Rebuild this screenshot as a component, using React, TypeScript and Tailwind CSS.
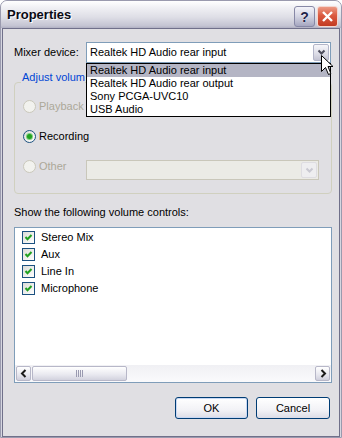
import React from "react";

const font = "font-['Liberation_Sans',Arial,sans-serif]";

function Chevron({ color = "#4d4d5c" }: { color?: string }) {
  return (
    <svg width="9" height="7" viewBox="0 0 9 7">
      <path d="M1.5 1.5 L4.5 4.5 L7.5 1.5" fill="none" stroke={color} strokeWidth="2" />
    </svg>
  );
}

function Radio({ checked, disabled }: { checked?: boolean; disabled?: boolean }) {
  return (
    <div
      className={
        "w-[13px] h-[13px] shrink-0 rounded-full border flex items-center justify-center " +
        (disabled
          ? "border-[#cac8bb] bg-[#f2f2ee]"
          : "border-[#1c5180] bg-[linear-gradient(135deg,#dcdcd7,#ffffff)]")
      }
    >
      {checked && <div className="w-[5px] h-[5px] rounded-full bg-[#21a121] shadow-[0_0_0_1px_#7fd07f]" />}
    </div>
  );
}

function Check({ label }: { label: string }) {
  return (
    <div className="h-[17px] flex items-center">
      <div className="w-[13px] h-[13px] border border-[#1c5180] bg-[linear-gradient(135deg,#dcdcd7,#ffffff)] flex items-center justify-center">
        <svg width="11" height="11" viewBox="0 0 11 11">
          <path d="M2.5 5 L4.5 7.2 L8.5 3" fill="none" stroke="#21a121" strokeWidth="2" />
        </svg>
      </div>
      <span className="ml-[6px] leading-[13px]">{label}</span>
    </div>
  );
}

function ScrollArrow({ dir }: { dir: "l" | "r" }) {
  return (
    <div className="w-[17px] h-full p-[1px]">
      <div className="w-full h-full rounded-[2px] border border-[#b7b7c8] bg-[linear-gradient(to_bottom,#ffffff,#e6e6ee_60%,#cfcfdc)] flex items-center justify-center">
        <svg width="8" height="9" viewBox="0 0 8 9">
          <path
            d={dir === "l" ? "M5.5 1 L2 4.5 L5.5 8" : "M2.5 1 L6 4.5 L2.5 8"}
            fill="none"
            stroke="#1a1a1a"
            strokeWidth="2"
          />
        </svg>
      </div>
    </div>
  );
}

export default function App() {
  return (
    <div className={`w-[342px] h-[438px] flex flex-col bg-[#d6d6e0] border border-[#9a9aae] rounded-t-[7px] overflow-hidden text-[11px] text-black ${font}`}>
      {/* title bar */}
      <div className="h-[27px] shrink-0 flex items-center pl-[6px] pr-[3px] bg-[linear-gradient(to_bottom,#ffffff_0%,#f0f0f4_25%,#dedee6_60%,#c4c4d2_92%,#b0b0c2_100%)]">
        <span className="font-bold text-[13px] leading-[16px] text-[#0a0a14] [text-shadow:1px_1px_0_#ffffff]">Properties</span>
        <div className="ml-auto flex gap-[2px] mt-[4px]">
          <div className="w-[21px] h-[21px] rounded-[3px] border border-[#8788a6] bg-[linear-gradient(to_bottom,#f4f4fa,#d2d3e2_50%,#a6a7c0)] flex items-center justify-center">
            <span className="font-bold text-[14px] leading-[14px] text-[#1f2448] [text-shadow:0_0_1px_#ffffff]">?</span>
          </div>
          <div className="w-[21px] h-[21px] rounded-[3px] border border-[#f4d6cf] bg-[linear-gradient(to_bottom,#ec9a84,#db5a40_45%,#c23a22)] flex items-center justify-center">
            <svg width="13" height="13" viewBox="0 0 13 13">
              <path d="M2 2 L11 11 M11 2 L2 11" stroke="#ffffff" strokeWidth="2.4" />
            </svg>
          </div>
        </div>
      </div>

      {/* body */}
      <div className="flex-1 mx-[1px] border border-[#70708a] bg-[#e0dfe3] pl-[11px] pr-[7px] pt-[13px] flex flex-col">
        <div className="flex items-center h-[21px]">
          <span className="w-[72px] shrink-0">Mixer device:</span>
          <div className="relative w-[245px] h-[21px] border border-[#7f9db9] bg-white flex items-center">
            <span className="flex-1 pl-[3px] leading-[13px]">Realtek HD Audio rear input</span>
            <div className="w-[16px] h-[17px] mr-[1px] rounded-[2px] border border-[#b3b5c8] bg-[linear-gradient(to_bottom,#f6f6fa,#dcdce6_60%,#c3c3d2)] flex items-center justify-center">
              <Chevron />
            </div>
            {/* open list */}
            <div className="absolute left-[-1px] top-[20px] w-[245px] border border-black bg-white z-10">
              <div className="h-[13px] leading-[13px] pl-[3px] bg-[#b4b5c4]">Realtek HD Audio rear input</div>
              <div className="h-[13px] leading-[13px] pl-[3px]">Realtek HD Audio rear output</div>
              <div className="h-[13px] leading-[13px] pl-[3px]">Sony PCGA-UVC10</div>
              <div className="h-[13px] leading-[13px] pl-[3px]">USB Audio</div>
            </div>
            {/* mouse pointer */}
            <svg className="absolute left-[234px] top-[12px] z-20" width="13" height="21" viewBox="0 0 13 21">
              <path d="M0.5 0.5 L0.5 16.5 L4.5 12.5 L7.5 19.5 L9.8 18.5 L7 11.5 L12 11.5 Z" fill="#ffffff" stroke="#000000" strokeWidth="1" />
            </svg>
          </div>
        </div>

        {/* group box */}
        <div className="relative mt-[19px] h-[112px] shrink-0 border border-[#d0d0bf] rounded-[4px] pl-[8px] pr-[12px] pt-[17px] flex flex-col">
          <span className="absolute left-[6px] -top-[12px] w-[64px] overflow-hidden whitespace-nowrap px-[1px] leading-[13px] bg-[#e0dfe3] text-[#0046d5]">Adjust volume for</span>
          <div className="flex items-center h-[13px]">
            <Radio disabled />
            <span className="ml-[3px] leading-[13px] text-[#aca899]">Playback</span>
          </div>
          <div className="flex items-center h-[13px] mt-[17px]">
            <Radio checked />
            <span className="ml-[3px] leading-[13px]">Recording</span>
          </div>
          <div className="flex items-start mt-[17px]">
            <Radio disabled />
            <span className="ml-[3px] w-[47px] leading-[13px] text-[#aca899]">Other</span>
            <div className="flex-1 h-[20px] border border-[#c9c7ba] bg-[#ebebe6] flex justify-end items-center">
              <div className="w-[16px] h-[16px] mr-[1px] rounded-[2px] border border-[#dedde2] bg-[#eeeef0] flex items-center justify-center">
                <Chevron color="#c9c9d2" />
              </div>
            </div>
          </div>
        </div>

        <div className="mt-[12px] h-[13px] leading-[13px]">Show the following volume controls:</div>

        {/* list */}
        <div className="mt-[8px] h-[156px] shrink-0 border border-[#7f9db9] bg-white flex flex-col">
          <div className="flex-1 pl-[7px] pt-[1px]">
            <Check label="Stereo Mix" />
            <Check label="Aux" />
            <Check label="Line In" />
            <Check label="Microphone" />
          </div>
          <div className="h-[17px] flex bg-[linear-gradient(to_bottom,#f0f0f4,#fafafc)]">
            <ScrollArrow dir="l" />
            <div className="w-[95px] h-full py-[1px]">
              <div className="w-full h-full rounded-[2px] border border-[#b7b7c8] bg-[linear-gradient(to_bottom,#ffffff,#e8e8ef_60%,#d2d2de)] flex items-center justify-center gap-[1px]">
                <div className="w-[1px] h-[7px] bg-[#9a9ab0]" />
                <div className="w-[1px] h-[7px] bg-[#9a9ab0]" />
                <div className="w-[1px] h-[7px] bg-[#9a9ab0]" />
                <div className="w-[1px] h-[7px] bg-[#9a9ab0]" />
              </div>
            </div>
            <div className="flex-1" />
            <ScrollArrow dir="r" />
          </div>
        </div>

        {/* buttons */}
        <div className="mt-[14px] flex justify-end gap-[8px] pr-[2px]">
          <button className="w-[73px] h-[22px] rounded-[3px] border border-[#003c74] bg-[linear-gradient(to_bottom,#ffffff,#f2f2f6_60%,#dcdce6)] shadow-[inset_0_0_0_1px_#c8d8f4] leading-[13px]">OK</button>
          <button className="w-[74px] h-[22px] rounded-[3px] border border-[#003c74] bg-[linear-gradient(to_bottom,#ffffff,#f2f2f6_60%,#dcdce6)] leading-[13px]">Cancel</button>
        </div>
      </div>
    </div>
  );
}
